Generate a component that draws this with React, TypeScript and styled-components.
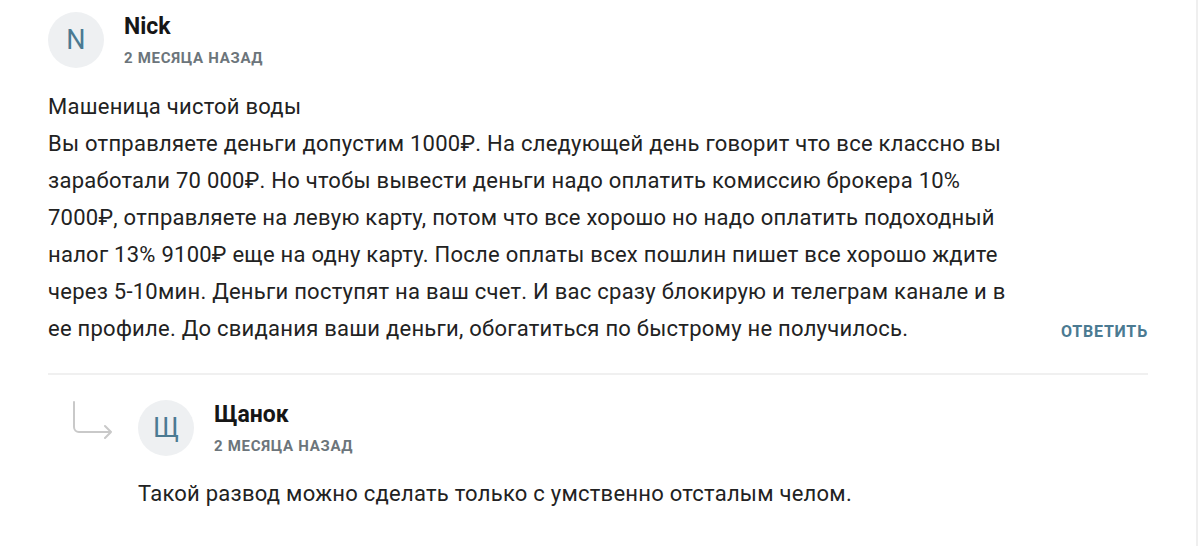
import React from "react";
import styled, { createGlobalStyle } from "styled-components";

const GlobalStyle = createGlobalStyle`
  body {
    margin: 0;
    background: #fff;
    font-family: Roboto, "Liberation Sans", sans-serif;
    color: #1d1d1d;
  }
`;

const Page = styled.main`
  width: 1198px;
  min-height: 546px;
  box-sizing: border-box;
  padding: 12px 0 0 48px;
  border-right: 2px solid #efefef;
`;

const Thread = styled.section`
  width: 1100px;
`;

const Comment = styled.article`
  display: flex;
  flex-direction: column;
`;

const Head = styled.header`
  display: flex;
  align-items: flex-start;
  gap: 20px;
`;

const Avatar = styled.div`
  width: 56px;
  height: 56px;
  border-radius: 50%;
  background: #eef0f2;
  color: #4b7a92;
  font-size: 27px;
  display: flex;
  align-items: center;
  justify-content: center;
  flex-shrink: 0;
`;

const Meta = styled.div`
  display: flex;
  flex-direction: column;
  gap: 8px;
  padding-top: 1px;
`;

const Name = styled.span`
  font-size: 23px;
  line-height: 28px;
  font-weight: 700;
  color: #161616;
`;

const Date = styled.span`
  font-size: 15px;
  line-height: 18px;
  font-weight: 700;
  letter-spacing: 0.7px;
  color: #6c757b;
  text-transform: uppercase;
`;

const BodyRow = styled.div`
  display: flex;
  align-items: flex-end;
  justify-content: space-between;
  margin-top: 20px;
`;

const Text = styled.p`
  margin: 0;
  font-size: 22px;
  line-height: 37px;
  letter-spacing: 0.25px;
  color: #222;
  max-width: 970px;
  white-space: pre-line;
`;

const ReplyButton = styled.button`
  border: none;
  background: none;
  padding: 0;
  margin-bottom: 6px;
  font-family: inherit;
  font-size: 16px;
  font-weight: 700;
  letter-spacing: 0.8px;
  color: #4b7a92;
  text-transform: uppercase;
  cursor: pointer;
`;

const Divider = styled.hr`
  border: none;
  border-top: 2px solid #f0f0f0;
  margin: 26px 0 0;
`;

const ReplyBlock = styled.div`
  display: flex;
  gap: 24px;
  padding: 25px 0 0 24px;
`;

const Nested = styled.div`
  display: flex;
  flex-direction: column;
`;

const NestedText = styled(Text)`
  margin-top: 19px;
`;

const ReplyArrow = () => (
  <svg width="42" height="38" viewBox="0 0 42 38" fill="none" style={{ marginTop: 1 }}>
    <path
      d="M2 1v25a5 5 0 0 0 5 5h32M33 25l6 6-6 6"
      stroke="#c9c9c9"
      strokeWidth="2"
      strokeLinecap="round"
      strokeLinejoin="round"
    />
  </svg>
);

const mainText = `Машеница чистой воды
Вы отправляете деньги допустим 1000₽. На следующей день говорит что все классно вы заработали 70 000₽. Но чтобы вывести деньги надо оплатить комиссию брокера 10% 7000₽, отправляете на левую карту, потом что все хорошо но надо оплатить подоходный налог 13% 9100₽ еще на одну карту. После оплаты всех пошлин пишет все хорошо ждите через 5-10мин. Деньги поступят на ваш счет. И вас сразу блокирую и телеграм канале и в ее профиле. До свидания ваши деньги, обогатиться по быстрому не получилось.`;

export default function App() {
  return (
    <Page>
      <GlobalStyle />
      <Thread>
        <Comment>
          <Head>
            <Avatar>N</Avatar>
            <Meta>
              <Name>Nick</Name>
              <Date>2 месяца назад</Date>
            </Meta>
          </Head>
          <BodyRow>
            <Text>{mainText}</Text>
            <ReplyButton>Ответить</ReplyButton>
          </BodyRow>
        </Comment>
        <Divider />
        <ReplyBlock>
          <ReplyArrow />
          <Nested>
            <Head>
              <Avatar>Щ</Avatar>
              <Meta>
                <Name>Щанок</Name>
                <Date>2 месяца назад</Date>
              </Meta>
            </Head>
            <NestedText>Такой развод можно сделать только с умственно отсталым челом.</NestedText>
          </Nested>
        </ReplyBlock>
      </Thread>
    </Page>
  );
}
